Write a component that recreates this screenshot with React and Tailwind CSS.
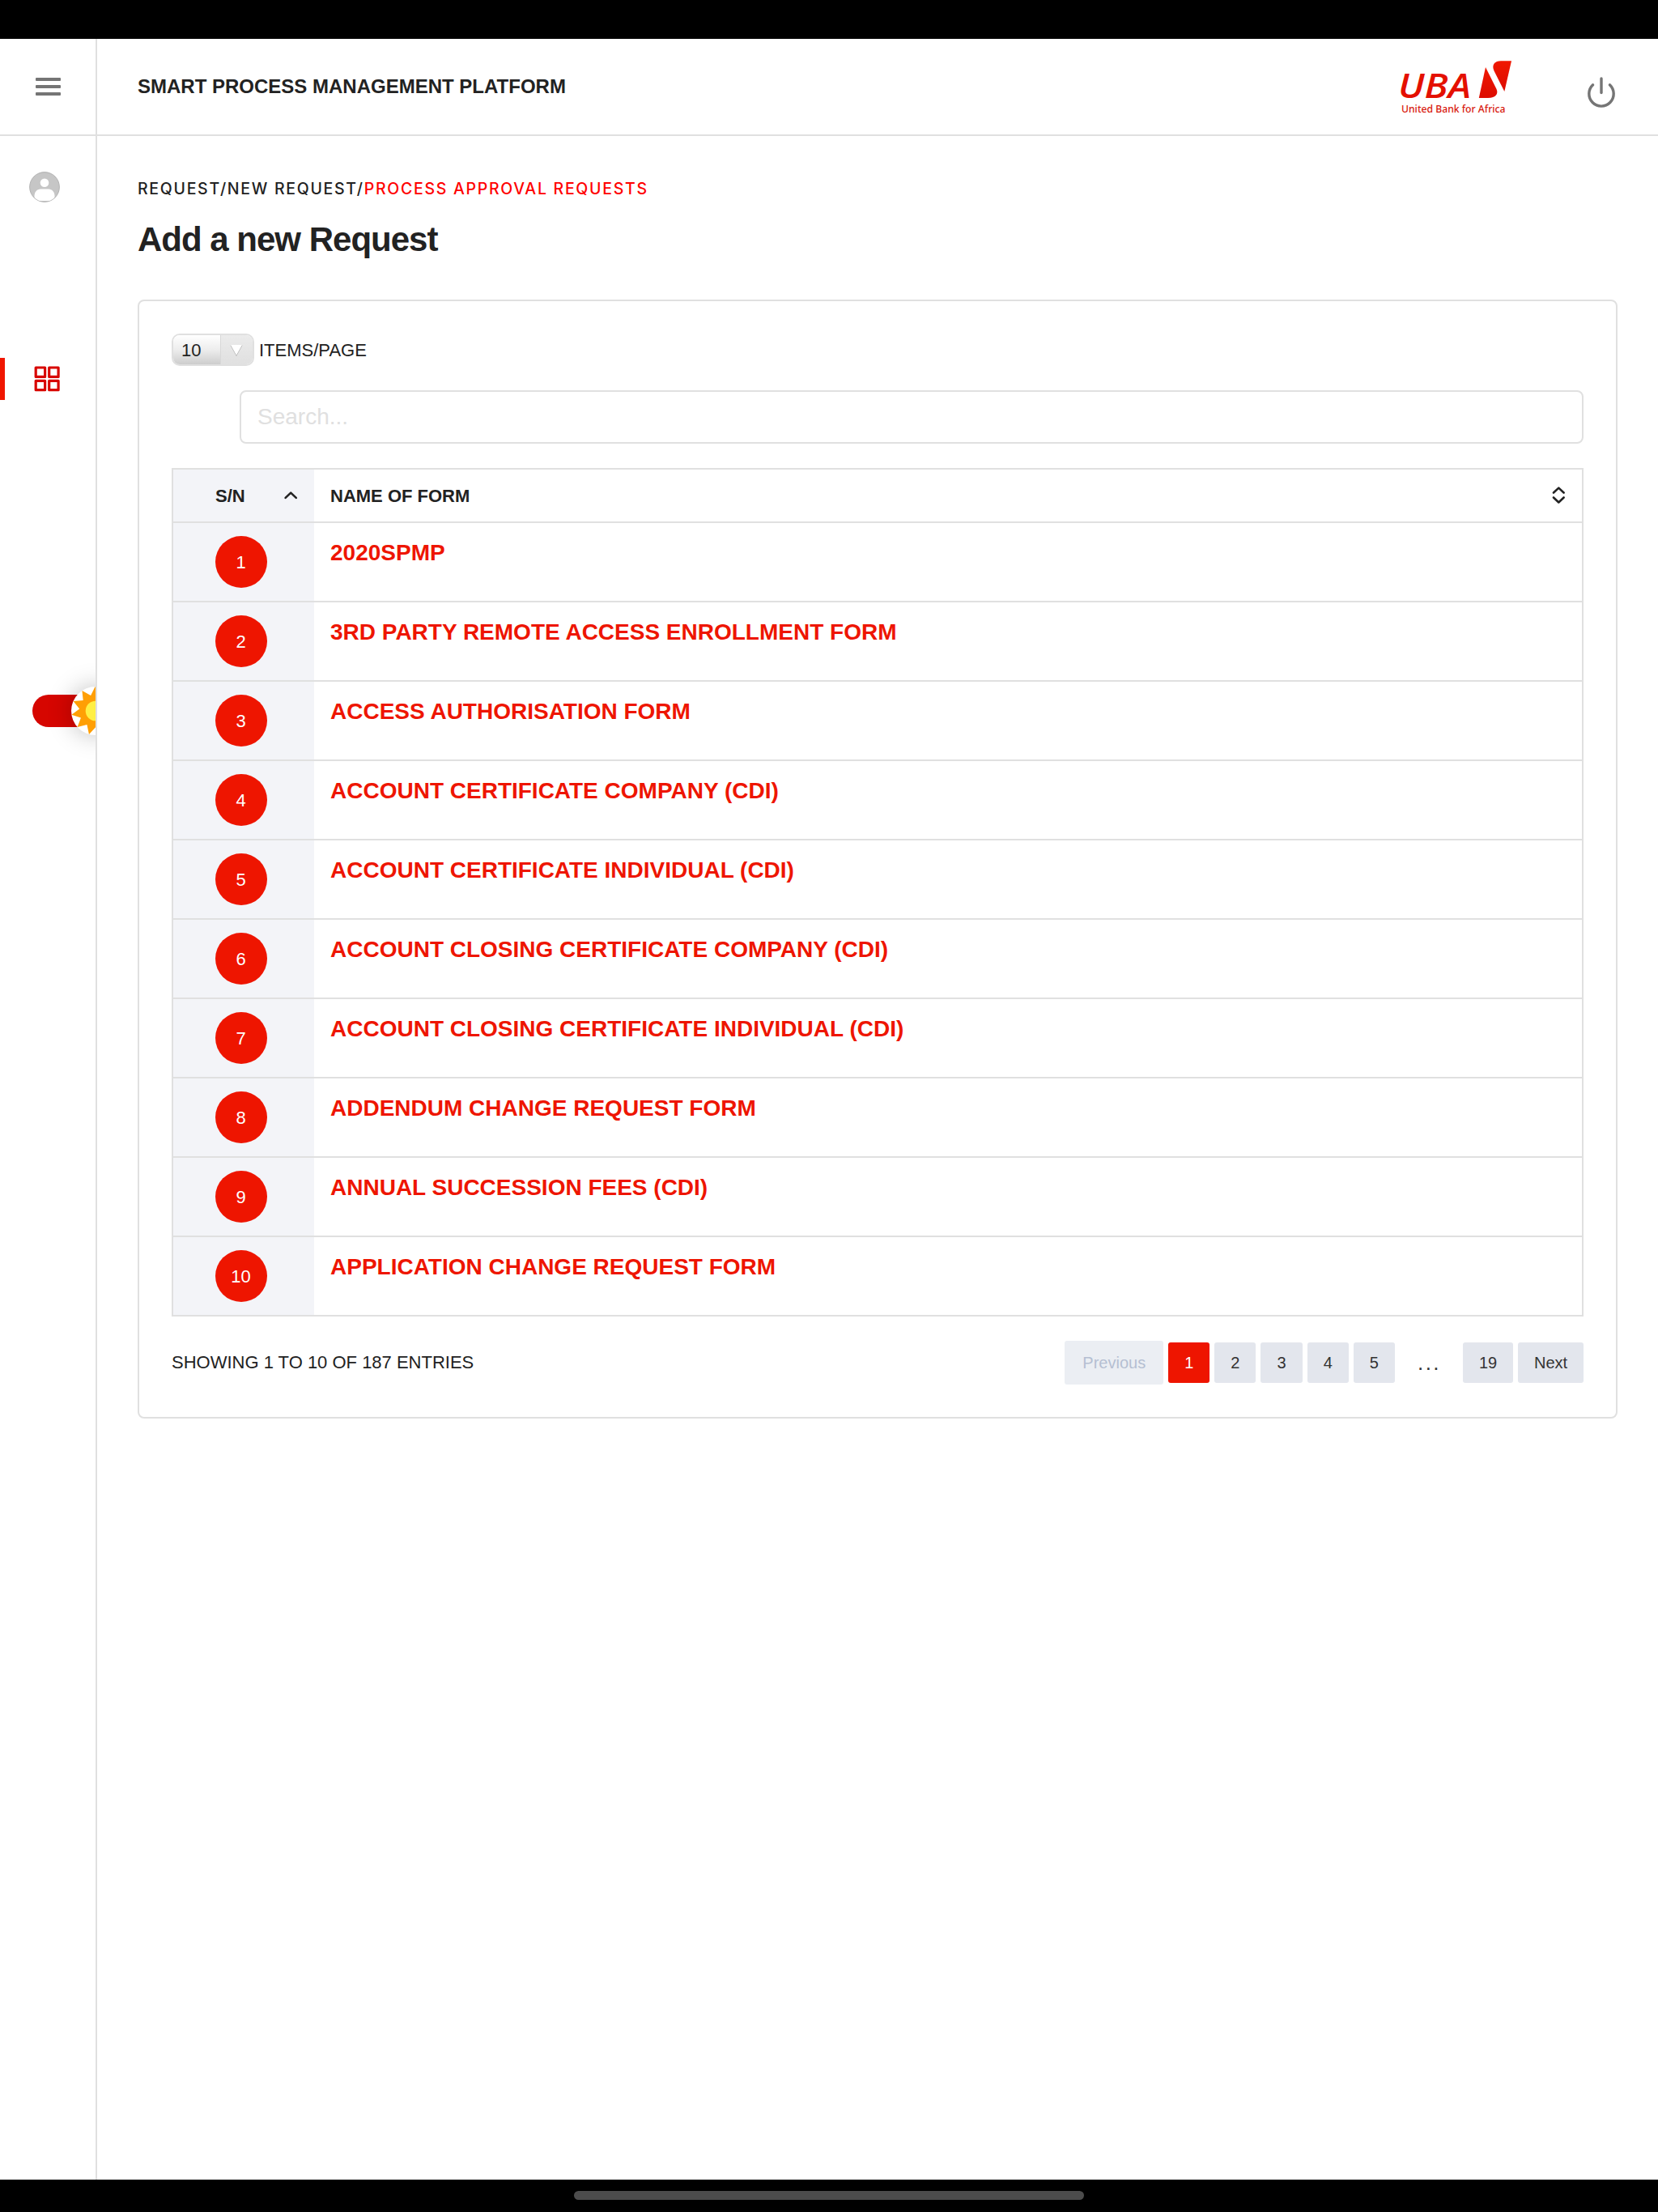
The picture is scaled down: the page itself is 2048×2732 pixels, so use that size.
const forms = [
  "2020SPMP",
  "3RD PARTY REMOTE ACCESS ENROLLMENT FORM",
  "ACCESS AUTHORISATION FORM",
  "ACCOUNT CERTIFICATE COMPANY (CDI)",
  "ACCOUNT CERTIFICATE INDIVIDUAL (CDI)",
  "ACCOUNT CLOSING CERTIFICATE COMPANY (CDI)",
  "ACCOUNT CLOSING CERTIFICATE INDIVIDUAL (CDI)",
  "ADDENDUM CHANGE REQUEST FORM",
  "ANNUAL SUCCESSION FEES (CDI)",
  "APPLICATION CHANGE REQUEST FORM",
];

function Header() {
  return (
    <header className="flex h-[120px] shrink-0 border-b-2 border-[#e0e0e0]">
      <div className="flex w-[120px] items-center border-r-2 border-[#e0e0e0] pl-[44px]">
        <button className="flex w-[31px] flex-col gap-[5px] pb-[1px]" aria-label="Menu">
          <span className="h-[4px] rounded-[1px] bg-[#757575]" />
          <span className="h-[4px] rounded-[1px] bg-[#757575]" />
          <span className="h-[4px] rounded-[1px] bg-[#757575]" />
        </button>
      </div>
      <div className="flex flex-1 items-center pl-[50px]">
        <h2 className="text-[24px] leading-[30px] font-bold">SMART PROCESS MANAGEMENT PLATFORM</h2>
        <Logo />
        <svg className="mt-[12px] mr-[50px] ml-[90px] h-[40px] w-[40px]" viewBox="0 0 40 40" fill="none" stroke="#757575" strokeWidth="3.4" strokeLinecap="round">
          <path d="M20 4V21.500" />
          <path d="M9.600 11.800A15.200 15.200 0 1 0 30.400 11.800" />
        </svg>
      </div>
    </header>
  );
}

function Logo() {
  return (
    <svg className="ml-auto h-[76px] w-[140px] overflow-visible" viewBox="0 0 140 76" aria-label="UBA United Bank for Africa">
      <defs>
        <linearGradient id="mark" x1="0" y1="0" x2="0" y2="1">
          <stop offset="0" stopColor="#f01800" />
          <stop offset="1" stopColor="#dc0c00" />
        </linearGradient>
      </defs>
      <text x="-1" y="52" textLength="90" lengthAdjust="spacingAndGlyphs" fill="#e41000" className="font-['Open_Sans',sans-serif] text-[41px] font-semibold italic">
        UBA
      </text>
      <path fill="url(#mark)" d="M107 14L120.500 41C123 46.500 120 52 110 52H98.800Z" />
      <path fill="url(#mark)" d="M139 6.200L130.300 44L117.500 18.500C114 11 118.500 6.200 126 6.200Z" />
      <text x="3" y="70" textLength="128.500" lengthAdjust="spacingAndGlyphs" fill="#d8180c" className="font-['Noto_Sans',sans-serif] text-[13px] font-medium">
        United Bank for Africa
      </text>
    </svg>
  );
}

function Sun() {
  const step = (2 * Math.PI) / 11;
  const spikes = Array.from({ length: 11 }, (_, i) => {
    const a = (171 * Math.PI) / 180 + i * step;
    const b = a + step / 2;
    return `${30 + 30 * Math.cos(a)},${30 + 30 * Math.sin(a)} ${30 + 20 * Math.cos(b)},${30 + 20 * Math.sin(b)}`;
  }).join(" ");
  return (
    <svg className="h-[60px] w-[60px]" viewBox="0 0 60 60">
      <polygon points={spikes} fill="#ff9f05" />
      <circle cx="30" cy="30" r="12.300" fill="#ffef45" />
    </svg>
  );
}

function Sidebar() {
  return (
    <aside className="flex w-[120px] shrink-0 flex-col overflow-hidden border-r-2 border-[#e0e0e0]">
      <svg className="mt-[44px] ml-[36px] h-[38px] w-[38px]" viewBox="0 0 38 38">
        <clipPath id="avatar">
          <circle cx="19" cy="19" r="18" />
        </clipPath>
        <circle cx="19" cy="19" r="18.400" fill="#c6c6c6" stroke="#a8a8a8" strokeWidth="0.800" />
        <circle cx="19" cy="13.800" r="5.300" fill="#fff" />
        <path clipPath="url(#avatar)" fill="#fff" d="M6.500 36V30C6.500 25 10 21.500 14 21.500H24C28 21.500 31.500 25 31.500 30V36Z" />
      </svg>
      <div className="mt-[192px] flex h-[52px] items-center">
        <span className="h-full w-[6px] bg-[#f01600]" />
        <svg className="ml-[36px] h-[32px] w-[32px]" viewBox="0 0 32 32" fill="none" stroke="#d80600" strokeWidth="3.200" strokeLinejoin="round">
          <rect x="2.200" y="2" width="11.400" height="11.400" />
          <rect x="18.700" y="2" width="11.400" height="11.400" />
          <rect x="2.200" y="18.300" width="11.400" height="11.400" />
          <rect x="18.700" y="18.300" width="11.400" height="11.400" />
        </svg>
      </div>
      <div className="mt-[334px] -mb-[100px] flex h-[200px] items-start pt-[20px] pl-[40px]">
        <div className="flex h-[60px] w-[108px] shrink-0 items-center">
          <div className="flex h-[40px] w-full items-center justify-end rounded-full bg-[#d60600]">
            <span className="shrink-0 rounded-full bg-white shadow-[0_0_30px_rgba(0,0,0,0.25)]">
              <Sun />
            </span>
          </div>
        </div>
      </div>
    </aside>
  );
}

function PageSize() {
  return (
    <div className="flex h-[40px] items-center text-[22px]">
      <div className="flex h-full w-[102px] overflow-hidden rounded-[10px] border-2 border-[#e0e0e0]">
        <span className="flex w-[59px] items-center border-r border-[#d8d8d8] bg-linear-to-b from-white via-[#ededed] via-50% to-[#cdcdcd] pt-px pl-[10px]">10</span>
        <span className="flex flex-1 items-center justify-center bg-linear-to-b from-[#ebebeb] to-[#e0e0e0]">
          <svg className="mt-[2px] -ml-[2px] h-[16px] w-[16px]" viewBox="0 0 16 16">
            <path d="M1 1.500L8 14.500L15 1.500" fill="#fff" stroke="#bdbdbd" strokeWidth="1" />
            <path d="M1.200 1H14.800L8 12.800Z" fill="#fff" />
          </svg>
        </span>
      </div>
      <span className="pt-px pl-[6px]">ITEMS/PAGE</span>
    </div>
  );
}

function FormTable() {
  return (
    <div className="mt-[30px] border-x-2 border-t-2 border-[#e0e0e0]">
      <div className="flex h-[66px] border-b-2 border-[#e0e0e0] text-[22px] font-bold">
        <div className="flex w-[174px] items-center justify-between bg-[#f3f4f8] pr-[20px] pl-[52px]">
          <span>S/N</span>
          <svg className="h-[16px] w-[18px]" viewBox="0 0 18 16" fill="none" stroke="#222" strokeWidth="2.600" strokeLinecap="round" strokeLinejoin="round">
            <path d="M2.600 10.900L9.200 4.600L15.800 10.900" />
          </svg>
        </div>
        <div className="flex flex-1 items-center justify-between pr-[20px] pl-[20px]">
          <span>NAME OF FORM</span>
          <svg className="h-[22px] w-[18px]" viewBox="0 0 18 22" fill="none" stroke="#222" strokeWidth="2.600" strokeLinecap="round" strokeLinejoin="round">
            <path d="M3 7.500L9.300 1.600L15.600 7.500M3 13.500L9.300 19.500L15.600 13.500" />
          </svg>
        </div>
      </div>
      {forms.map((name, i) => (
        <div key={name} className="flex h-[98px] border-b-2 border-[#e0e0e0]">
          <div className="w-[174px] bg-[#f3f4f8] pt-[16px] pl-[52px]">
            <span className="flex h-[64px] w-[64px] items-center justify-center rounded-full bg-[#ee1500] pr-px text-[22px] text-white">{i + 1}</span>
          </div>
          <a className="pt-[17px] pl-[20px] text-[28px] leading-[40px] font-bold text-[#ee1500]">{name}</a>
        </div>
      ))}
    </div>
  );
}

function Pagination() {
  return (
    <nav className="flex items-center text-[20px] text-[#333]">
      <span className="mr-[6px] flex h-[54px] w-[122px] items-center justify-center rounded-[3px] bg-[#ebeef3] text-[#b5bfd2]">Previous</span>
      <div className="flex gap-[6px]">
        <span className="flex h-[50px] w-[51px] items-center justify-center rounded-[3px] bg-[#ee1500] text-white">1</span>
        {["2", "3", "4", "5"].map((n) => (
          <span key={n} className="flex h-[50px] w-[51.200px] items-center justify-center rounded-[3px] bg-[#e3e6ed]">
            {n}
          </span>
        ))}
      </div>
      <span className="w-[84px] pl-px text-center text-[26px] tracking-[2.500px]">...</span>
      <span className="mr-[6px] flex h-[50px] w-[62px] items-center justify-center rounded-[3px] bg-[#e3e6ed]">19</span>
      <span className="flex h-[50px] w-[81px] items-center justify-center rounded-[3px] bg-[#e3e6ed]">Next</span>
    </nav>
  );
}

export default function App() {
  return (
    <div className="flex h-[2732px] w-[2048px] flex-col bg-white font-['Liberation_Sans',sans-serif] text-[#222]">
      <div className="h-[48px] shrink-0 bg-black" />
      <Header />
      <div className="flex min-h-0 flex-1">
        <Sidebar />
        <main className="flex-1 pt-[53px] pr-[50px] pl-[50px]">
          <p className="font-['Inter',sans-serif] text-[19.500px] leading-[24px] font-medium tracking-[1.710px]">
            <span>REQUEST/NEW REQUEST/</span>
            <span className="text-[#ff0000]">PROCESS APPROVAL REQUESTS</span>
          </p>
          <h1 className="mt-[26px] text-[42px] leading-[50px] font-bold tracking-[-1px]">Add a new Request</h1>
          <section className="mt-[49px] h-[1382px] rounded-[8px] border-2 border-[#e0e0e0] px-[40px] pt-[40px]">
            <PageSize />
            <div className="mt-[30px] ml-[84px] flex h-[66px] items-center rounded-[8px] border-2 border-[#e0e0e0] pl-[20px] text-[28px] text-[#e0e0e0]">
              Search...
            </div>
            <FormTable />
            <div className="mt-[30px] flex items-center justify-between">
              <p className="pb-[2px] text-[22px]">SHOWING 1 TO 10 OF 187 ENTRIES</p>
              <Pagination />
            </div>
          </section>
        </main>
      </div>
      <div className="flex h-[40px] shrink-0 justify-center bg-black pt-[14px]">
        <div className="h-[11px] w-[630px] rounded-full bg-[#4c4c4c]" />
      </div>
    </div>
  );
}
